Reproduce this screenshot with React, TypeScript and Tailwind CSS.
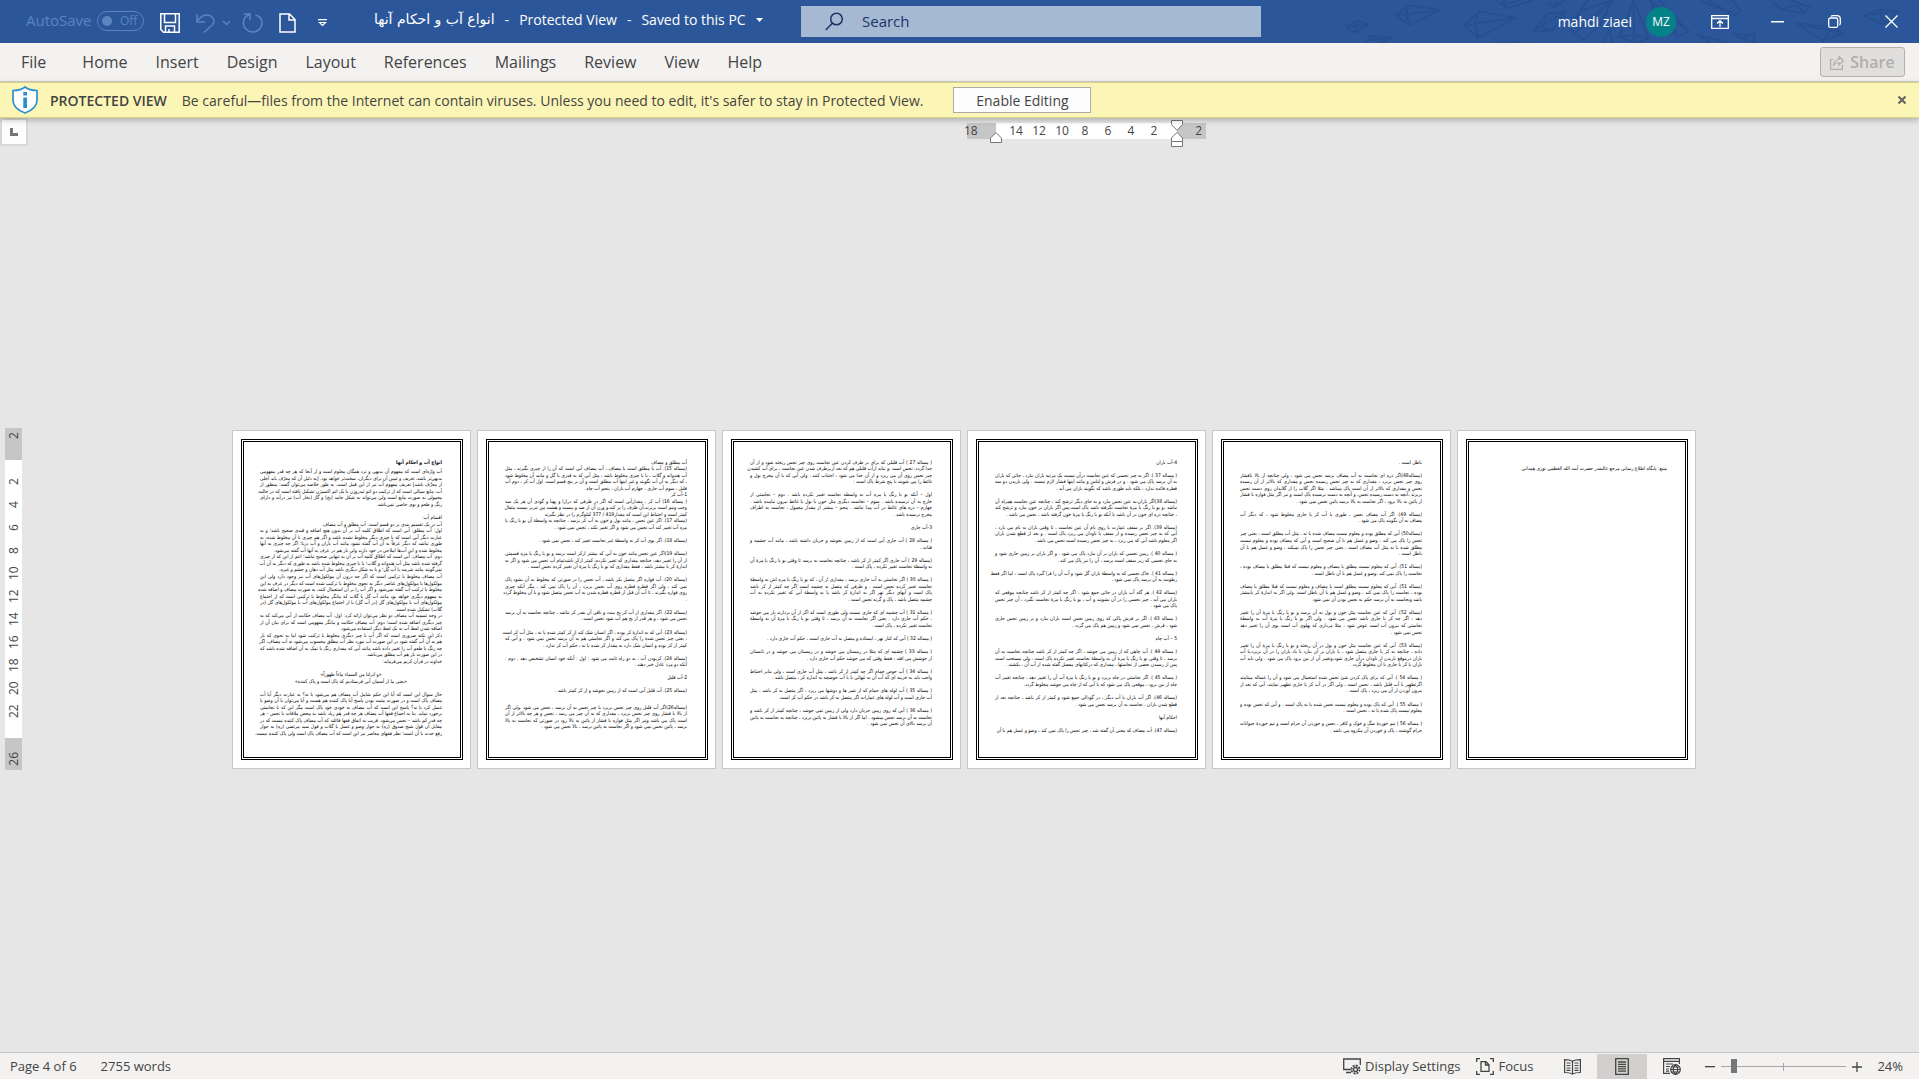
import type { ReactNode } from "react";
import clsx from "clsx";

type Block = {
  lines: string[];
  align?: "center";
  bold?: boolean;
  half?: boolean;
};

const p = (...lines: string[]): Block => ({ lines });
const gap: Block = { lines: [""] };
const halfGap: Block = { lines: [""], half: true };

const pages: Block[][] = [
  [
    { lines: ["انواع آب و احکام آنها"], bold: true },
    halfGap,
    p(
      "آب واژه‌ای است که مفهوم آن بدیهی و نزد همگان معلوم است و از آنجا که هر چه قدر مفهومی",
      "بدیهی‌تر باشد، تعریف و تبیین آن برای دیگران، سخت‌تر خواهد بود. [به دلیل آن که معرّف باید اَجلی",
      "از معرَّف باشد] تعریف مفهوم آب نیز از این قبیل است. به طور خلاصه می‌توان گفت: منظور از",
      "آب، مایع سیالی است که از ترکیب دو اتم ئیدروژن با یک اتم اکسیژن تشکیل یافته است که در حالت",
      "معمولی به صورت مایع است ولی می‌تواند به شکل جامد (یخ) و گاز (بخار آب) نیز در‌آید و دارای",
      "رنگ و طعم و بوی خاصی نمی‌باشد.",
    ),
    gap,
    p("اقسام آب:"),
    p("آب در یک تقسیم بندی بر دو قسم است: آب مطلق و آب مضاف."),
    p(
      "اول: آب مطلق: آبی است که اطلاق کلمه آب بر آن بدون هیچ اضافه و قیدی صحیح باشد؛ و به",
      "عبارت دیگر آبی است که با چیزی دیگر مخلوط نشده باشد و اگر هم چیزی با آن مخلوط شده، به",
      "طوری نباشد که دیگر عرفاً به آن آب گفته نشود مانند آب باران و آب دریا؛ اگر چه چیزی به آنها",
      "مخلوط شده و این آب‌ها املاحی در خود دارند ولی باز هم در عرف به آنها آب گفته می‌شود.",
    ),
    p(
      "دوم: آب مضاف: آبی است که اطلاق کلمه آب بر آن به تنهایی صحیح نباشد؛ اعم از این که از چیزی",
      "گرفته شده باشد مثل آب هندوانه و گلاب؛ یا با چیزی مخلوط شده باشد به طوری که دیگر به آن آب",
      "نمی‌گویند مانند شربت یا آب گِل؛ و یا به شکل دیگری باشد مثل آب دهان و چشم و غیره.",
    ),
    p(
      "آب مضاف مخلوط یا ترکیبی است که اگر چه درون آن مولکول‌های آب نیز وجود دارد ولی این",
      "مولکول‌ها با مولکول‌های عناصر دیگر به نحوی مخلوط یا ترکیب شده است که دیگر در عرف به این",
      "مخلوط یا ترکیب آب گفته نمی‌شود و اگر آب را بر آن استعمال کنند، به صورت مضاف و اضافه شده",
      "به مفهوم دیگری خواهد بود مانند آب گل یا گلاب که بیانگر مخلوط یا ترکیبی است که از اجتماع",
      "مولکول‌های آب با مولکول‌های گل (در آب گل) یا از اجتماع مولکول‌های آب با مولکول‌های گل (در",
      "گلاب) تشکیل شده است.",
    ),
    p(
      "در وجه تسمیه آب مضاف دو نظر می‌توان ارائه کرد: اول: آب مضاف حکایت از آبی می‌کند که به",
      "چیز دیگری اضافه شده است؛ دوم: آب مضاف حکایت و بیانگر مفهومی است که برای بیان آن از",
      "اضافه شدن لفظ آب به یک لفظ دیگر استفاده می‌شود.",
    ),
    p(
      "ذکر این نکته ضروری است که اگر آب با چیز دیگری مخلوط یا ترکیب شود اما به نحوی که باز",
      "هم به آن آب گفته شود در این صورت آب مورد نظر آب مطلق محسوب می‌شود نه آب مضاف، اگر",
      "چه رنگ یا طعم آب را تغییر داده باشد مانند آبی که مقداری رنگ یا نمک به آن اضافه شده باشد که",
      "در این صورت باز هم آب مطلق می‌باشد.",
    ),
    p("خداوند در قرآن کریم می‌فرماید:"),
    gap,
    { lines: ["«و انزلنا من السماء ماءاً طهوراً»", "«یعنی ما از آسمان آبی فرستادیم که پاک است و پاک کننده»"], align: "center" },
    gap,
    p(
      "حال سوال این است که آیا این حکم شامل آب مضاف هم می‌شود یا نه؟ به عبارت دیگر آیا آب",
      "مضاف پاک است و در صورت مثبت بودن پاسخ آیا پاک کننده هم هست و آیا می‌توان با آن وضو یا",
      "غسل کرد یا نه؟ پاسخ این است که آب مضاف به خودی خود پاک است مگر این که با نجاستی",
      "برخورد نماید. بنا به اجماع فقها آب مضاف هر چه قدر هم زیاد باشد به محض ملاقات با نجس – هر",
      "چه قدر کم باشد – نجس می‌شود. قریب به اتفاق فقها قائلند که آب مضاف پاک کننده نیست که در",
      "مقابل آن قول شیخ صدوق (ره) به جواز وضو و غسل با گلاب و قول سید مرتضی (ره) به جواز",
      "رفع حدث با آن است؛ نظر فقهای معاصر نیز این است که آب مضاف پاک است ولی پاک کننده نیست.",
    ),
  ],
  [
    p("آب مطلق و مضاف"),
    p(
      "(مساله 15). آب یا مطلق است یا مضاف ، آب مضاف آبی است که آن را از چیزی بگیرند ، مثل",
      "آب هندوانه و گلاب ، یا با چیزی مخلوط باشد ، مثل آبی که به قدری با گل و مانند آن مخلوط شود",
      "، که دیگر به آن آب نگویند و غیر اینها آب مطلق است و آن بر پنج قسم است. اول آب کر ، دوم آب",
      "قلیل ، سوم آب جاری ، چهارم آب باران ، پنجم آب چاه .",
    ),
    p("1-آب کر"),
    p(
      "( مساله 16) آب کر ، مقدارآبی است که اگر در ظرفی که درازا و پهنا و گودی آن هر یک سه",
      "وجب ونیم است بریزند،آن ظرف را پر کند،و وزن آن از صد و بیست و هشت من تبریز بیست مثقال",
      "کمتر است و احتیاط این است که مقدار419 / 377 کیلوگرم را در نظر بگیرند",
    ),
    p(
      "(مساله 17). اگر عین نجس ، مانند بول و خون به آب کر برسد ، چنانچه به واسطهٔ آن بو یا رنگ یا",
      "مزه آب تغییر کند آب نجس می شود و اگر تغییر نکند ، نجس نمی شود .",
    ),
    gap,
    p("(مساله 18). اگر بوی آب کر به واسطهٔ غیر نجاست تغییر کند ، نجس نمی شود ."),
    gap,
    p(
      "(مساله 19)اگر عین نجس مانند خون به آبی که بیشتر ازکر است برسد و بو یا رنگ یا مزه قسمتی",
      "از آن را تغییر دهد، چنانچه مقداری که تغییر نکرده، کمتر ازکر باشدتمام آب نجس می شود و اگر به",
      "اندازهٔ کر یا بیشتر باشد ، فقط مقداری که بو یا رنگ یا مزهٔ آن تغییر کرده نجس است .",
    ),
    gap,
    p(
      "(مساله 20). آب فواره اگر متصل بکر باشد ، آب نجس را در صورتی که مخلوط به آن بشود پاک",
      "نمی کند ، ولی اگر قطره قطره روی آب نجس بریزد ، آن را پاک نمی کند ، مگر آنکه چیزی",
      "روی فواره بگیرند ، تا آب آن قبل از قطره قطره شدن به آب نجس متصل شود و با آن مخلوط گردد",
      ".",
    ),
    gap,
    p(
      "(مساله 22). اگر مقداری از آب کر یخ ببندد و باقی آن بقدر کر نباشد ، چنانچه نجاست به آن برسد",
      "نجس می شود ، و هر قدر از یخ هم آب شود نجس است .",
    ),
    gap,
    p(
      "(مساله 23). آبی که به اندازهٔ کر بوده ، اگر انسان شک کند از کر کمتر شده یا نه ، مثل آب کر است",
      "، یعنی چیز نجس شده را پاک می کند و اگر نجاستی هم به آن برسد نجس نمی شود . و آبی که",
      "کمتر از کر بوده و انسان شک دارد به مقدار کر شده یا نه ، حکم آب کر ندارد .",
    ),
    gap,
    p(
      "(مساله 24). کربودن آب ، به دو راه ثابت می شود : اول : آنکه خود انسان تشخیص دهد . دوم :",
      "آنکه دو مرد عادل خبر دهند .",
    ),
    gap,
    p("2-آب قلیل"),
    gap,
    p("(مساله 25). آب قلیل آبی است که از زمین نجوشد و از کر کمتر باشد ."),
    gap,
    halfGap,
    p(
      "(مساله26)اگر آب قلیل روی چیز نجس بریزد یا چیز نجس به آن برسد ، نجس می شود .ولی اگر",
      "از بالا با فشار روی چیز نجس بریزد ، مقداری که به آن چیز می رسد ، نجس و هر چه بالاتر از آن",
      "است پاک می باشد ونیز اگر مثل فواره با فشار از پائین به بالا رود در صورتی که نجاست به بالا",
      "برسد ، پائین نجس نمی شود و اگر نجاست به پائین برسد ، بالا نجس می شود .",
    ),
  ],
  [
    p(
      "( مساله 27 ) آب قلیلی که برای بر طرف کردن عین نجاست روی چیز نجس ریخته شود و از آن",
      "جدا گردد، نجس است .و نباید ازآب قلیلی هم که بعد ازبرطرف شدن عین نجاست ، برای آب کشیدن",
      "چیز نجس روی آن می ریزد و از آن جدا می شود ، اجتناب کنند . ولی آبی که با آن مخرج بول و",
      "غائط را می شویند با پنج شرط پاک است :",
    ),
    gap,
    p(
      "اول – آنکه بو یا رنگ یا مزه آب به واسطه نجاست تغییر نکرده باشد . دوم – نجاستی از",
      "خارج به آن نرسیده باشد . سوم – نجاست دیگری مثل خون یا بول یا غائط بیرون نیامده باشد .",
      "چهارم – ذره های غائط در آب پیدا نباشد . پنجم – بیشتر از مقدار معمول ، نجاست به اطراف",
      "مخرج نرسیده باشد .",
    ),
    gap,
    p("3-آب جاری"),
    gap,
    p(
      "( مساله 28 ) آب جاری آبی است که از زمین بجوشد و جریان داشته باشد ، مانند آب چشمه و",
      "قنات .",
    ),
    gap,
    p(
      "(مساله 29 ) آب جاری اگر کمتر از کر باشد ، چنانچه نجاست به برسد تا وقتی بو یا رنگ یا مزهٔ آن",
      "به واسطهٔ نجاست تغییر نکرده ، پاک است .",
    ),
    gap,
    p(
      "( مساله 30 ) اگر نجاستی به آب جاری برسد ، مقداری از آن ، که بو یا رنگ یا مزه اش به واسطهٔ",
      "نجاست تغییر کرده نجس است . و طرفی که متصل به چشمه است اگر چه کمتر از کر باشد",
      "پاک است و آبهای دیگر نهر اگر به اندازهٔ کر باشد یا به واسطهٔ آبی که تغییر نکرده به آب",
      "چشمه متصل باشد ، پاک و گرنه نجس است .",
    ),
    gap,
    p(
      "( مساله 31 ) آب چشمه ای که جاری نیست ولی طوری است که اگر از آن بردارند باز می جوشد",
      "، حکم آب جاری دارد . یعنی اگر نجاست به آن برسد ، تا وقتی بو یا رنگ یا مزهٔ آن به واسطهٔ",
      "نجاست تغییر نکرده ، پاک است .",
    ),
    gap,
    p("( مساله 32 ) آبی که کنار نهر ، ایستاده و متصل به آب جاری است ، حکم آب جاری دارد ."),
    gap,
    p(
      "( مساله 33 ) چشمه ای که مثلا در زمستان می جوشد و در زمستان می جوشد و در تابستان",
      "از جوشش می افتد ، فقط وقتی که می جوشد حکم آب جاری دارد .",
    ),
    gap,
    p(
      "( مساله 34 ) آب حوض حمام اگر چه کمتر از کر باشد ، مثل آب جاری است ، ولی بنابر احتیاط",
      "واجب باید به خزینه ای که آب آن به تنهائی یا با آب حوضچه به اندازه کر ، متصل باشد .",
    ),
    gap,
    p(
      "( مساله 35 ) آب لوله های حمام که از شیر ها و دوشها می ریزد ، اگر متصل به کر باشد ، مثل",
      "آب جاری است و آب لوله های عمارات اگر متصل به کر باشد در حکم آب کر است.",
    ),
    gap,
    p(
      "( مساله 36 ) آبی که روی زمین جریان دارد ولی از زمین نمی جوشد ، چنانچه کمتر از کر باشد و",
      "نجاست به آن برسد نجس میشود . اما اگر از بالا با فشار به پائین بریزد ، چنانچه به نجاست به پائین",
      "آن برسد بالای آن نجس نمی شود .",
    ),
  ],
  [
    p("4-آب باران"),
    gap,
    p(
      "( مساله 37 ). اگر به چیز نجسی که عین نجاست درآن نیست یک مرتبه باران ببارد ، جائی که باران",
      "به آن برسد پاک می شود . و در فرش و لباس و مانند اینها فشار لازم نیست . ولی باریدن دو سه",
      "قطره فائده ندارد ، بلکه باید طوری باشد که بگویند باران می آید .",
    ),
    gap,
    p(
      "(مساله 38)اگر باران،به عین نجس ببارد و به جای دیگر ترشح کند ، چنانچه عین نجاست همراه آن",
      "نباشد ،و بو یا رنگ یا مزهٔ نجاست نگرفته باشد پاک است.پس اگر باران بر خون ببارد و ترشح کند",
      "، چنانچه ذره ای خون در آن باشد یا آنکه بو یا رنگ یا مزهٔ خون گرفته باشد ، نجس می باشد .",
    ),
    gap,
    p(
      "(مساله 39). اگر بر سقف عمارت یا روی بام آن عین نجاست ، تا وقتی باران به بام می بارد ،",
      "آبی که به چیز نجس رسیده و از سقف یا ناودان می ریزد پاک است . و بعد از قطع شدن باران",
      "اگر معلوم باشد آبی که می ریزد ، به چیز نجس رسیده است نجس می باشد .",
    ),
    gap,
    p(
      "( مساله 40 ). زمین نجسی که باران بر آن ببارد پاک می شود . و اگر باران بر زمین جاری شود و",
      "به جای نجسی که زیر سقف است برسد ، آن را نیز پاک می کند .",
    ),
    gap,
    p(
      "( مساله 41 ). خاک نجسی که به واسطهٔ باران گل شود و آب آن را فرا گیرد پاک است ، اما اگر فقط",
      "رطوبت به آن برسد پاک نمی شود .",
    ),
    gap,
    p(
      "(مساله 42 ). هر گاه آب باران در جائی جمع شود ، اگر چه کمتر از کر باشد چنانچه موقعی که",
      "باران می آید ، چیز نجسی را در آن بشویند و آب ، بو یا رنگ یا مزهٔ نجاست نگیرد ، آن چیز نجس",
      "پاک می شود .",
    ),
    gap,
    p(
      "( مساله 43 ). اگر بر فرش پاکی که روی زمین نجس است باران ببارد و بر زمین نجس جاری",
      "شود ، فرش ، نجس نمی شود و زمین هم پاک می گردد .",
    ),
    gap,
    p("5 – آب چاه"),
    gap,
    p(
      "( مساله 44 ). آب چاهی که از زمین می جوشد ، اگر چه کمتر از کر باشد چنانچه نجاست به آن",
      "برسد ، تا وقتی بو یا رنگ یا مزهٔ آن به واسطهٔ نجاست تغییر نکرده پاک است ، ولی مستحب است",
      "پس از رسیدن بعضی از نجاستها ، مقداری که درکتابهای مفصل گفته شده از آب آن ، بکشند .",
    ),
    gap,
    p(
      "( مساله 45 ). اگر نجاستی در چاه بریزد و بو یا رنگ یا مزهٔ آب آن را تغییر دهد ، چنانچه تغییر آب",
      "چاه از بین برود ، موقعی پاک می شود که با آبی که از چاه می جوشد مخلوط گردد.",
    ),
    gap,
    p(
      "(مساله 46). اگر آب باران یا آب دیگر ، در گودالی جمع شود و کمتر از کر باشد ، چنانچه بعد از",
      "قطع شدن باران ، نجاست به آن برسد نجس می شود .",
    ),
    gap,
    p("احکام آبها"),
    gap,
    p("(مساله 47). آب مضاف که معنی آن گفته شد ، چیز نجس را پاک نمی کند ، وضو و غسل هم با آن"),
  ],
  [
    p("باطل است ."),
    gap,
    p(
      "(مساله48)اگر ذره ای نجاست به آب مضاف برسد نجس می شود ، ولی چنانچه از بالا بافشار",
      "روی چیز نجس بریزد ، مقداری که به چیز نجس رسیده نجس و مقداری که بالاتر از آن رسیده",
      "نجس و مقداری که بالاتر از آن است پاک میباشد . مثلا اگر گلاب را از گلابدان روی دست نجس",
      "بریزند ،آنچه به دست رسیده نجس، و آنچه به دست نرسیده پاک است و نیز اگر مثل فواره با فشار",
      "از پائین به بالا برود ، اگر نجاست به بالا برسد پائین نجس نمی شود .",
    ),
    gap,
    p(
      "(مساله 49). اگر آب مضاف نجس ، طوری با آب کر یا جاری مخلوط شود ، که دیگر آب",
      "مضاف به آن نگویند پاک می شود .",
    ),
    gap,
    p(
      "(مساله50) آبی که مطلق بوده و معلوم نیست مضاف شده یا نه ، مثل آب مطلق است ، یعنی چیز",
      "نجس را پاک می کند ، وضو و غسل هم با آن صحیح است و آبی که مضاف بوده و معلوم نیست",
      "مطلق شده یا نه مثل آب مضاف است ، یعنی چیز نجس را پاک نمیکند ، وضو و غسل هم با آن",
      "باطل است .",
    ),
    gap,
    p(
      "(مساله 51). آبی که معلوم نیست مطلق یا مضاف و معلوم نیست که قبلا مطلق یا مضاف بوده ،",
      "نجاست را پاک نمی کند ،وضو و غسل هم با آن باطل است .",
    ),
    gap,
    p(
      "(مساله 51). آبی که معلوم نیست مطلق است یا مضاف و معلوم نیست که قبلا مطلق یا مضاف",
      "بوده ، نجاست را پاک نمی کند ، وضو و غسل هم با آن باطل است .ولی اگر به اندازهٔ کر یابیشتر",
      "باشد ونجاست به آن برسد حکم به نجس بودن آن نمی شود",
    ),
    gap,
    p(
      "(مساله 52). آبی که عین نجاست مثل خون و بول به آن برسد و بو یا رنگ یا مزهٔ آن را تغییر",
      "دهد ، اگر چه کر یا جاری باشد نجس می شود . ولی اگر بو یا رنگ یا مزهٔ آب به واسطهٔ",
      "نجاستی که بیرون آب است عوض شود ، مثلا مرداری که پهلوی آب است بوی آن را تغییر دهد",
      "نجس نمی شود .",
    ),
    gap,
    p(
      "(مساله 53). آبی که عین نجاست مثل خون و بول در آن ریخته و بو یا رنگ یا مزهٔ آن را تغییر",
      "داده ، چنانچه به کر یا جاری متصل شود ، یا باران بر آن ببارد یا باد باران را در آن بریزد،یا آب",
      "باران درموقع باریدن از ناودان درآن جاری شود،وتغییر آن از بین برود پاک می شود . ولی باید آب",
      "باران یا کر یا جاری با آن مخلوط گردد .",
    ),
    gap,
    p(
      "( مساله 54 ). آبی که برای پاک کردن شئ نجس شده استعمال می شود و آن را غساله مینامند",
      "اگرتطهیر با آب قلیل باشد ، نجس است ، ولی اگر در آب کر یا جاری تطهیر نمایند، آبی که بعد از",
      "بیرون آوردن از آن می ریزد ، پاک است .",
    ),
    gap,
    p(
      "( مساله 55 ). آبی که پاک بوده و معلوم نیست نجس شده یا نه پاک است . و آبی که نجس بوده و",
      "معلوم نیست پاک شده یا نه ، نجس است .",
    ),
    gap,
    p(
      "( مساله 56 ) نیم خوردهٔ سگ و خوک و کافر ، نجس و خوردن آن حرام است و نیم خوردهٔ حیوانات",
      "حرام گوشت ، پاک و خوردن آن مکروه می باشد .",
    ),
  ],
  [gap, p("منبع: پایگاه اطلاع رسانی مرجع عالیقدر حضرت آیت الله العظمی نوری همدانی")],
];

const tabs = ["Home", "Insert", "Design", "Layout", "References", "Mailings", "Review", "View", "Help"];

function Sheet({ blocks }: { blocks: Block[] }) {
  return (
    <article dir="rtl" lang="fa" className="h-[339px] w-[239px] border border-[#c6c6c6] bg-white py-2 pl-2 pr-[7px]">
      <div className="h-full border-[3px] border-double border-black pl-4 pr-[18px] pt-[17px]">
        <div className="grid h-[278px] grid-cols-1 grid-rows-[repeat(85,minmax(0,1fr))] font-['DejaVu_Sans_Condensed','DejaVu_Sans',sans-serif] text-[5px] leading-[6px] text-black">
          {blocks.map((block, i) =>
            block.lines.map((line, j) => (
              <p
                key={`${i}-${j}`}
                className={clsx(
                  "whitespace-nowrap",
                  block.half ? "row-span-1" : "row-span-2",
                  block.bold && "font-bold",
                  block.align === "center" && "text-center",
                  block.align !== "center" && j < block.lines.length - 1 && "[text-align-last:justify]",
                )}
              >
                {line}
              </p>
            )),
          )}
        </div>
      </div>
    </article>
  );
}

function RulerTop() {
  return (
    <div className="relative flex h-4 w-[239px] text-[12px] leading-4 text-[#444444]">
      <div className="w-[29px] bg-[#c6c6c6]">
        <span className="-ml-[3px]">18</span>
      </div>
      <div className="flex flex-1 justify-center bg-white pr-[3px]">
        {[14, 12, 10, 8, 6, 4, 2].map((n) => (
          <span key={n} className="w-[23px] text-center">
            {n}
          </span>
        ))}
      </div>
      <div className="w-[29px] bg-[#c6c6c6] pr-1 text-right">2</div>
      <svg className="absolute left-[23px] top-[9px]" width="12" height="11" viewBox="0 0 12 11">
        <path d="M.5 10.500V6L6 .7 11.500 6v4.500z" fill="#fff" stroke="#767676" />
      </svg>
      <svg className="absolute -top-[3px] right-[23px]" width="12" height="28" viewBox="0 0 12 28">
        <path d="M.5.500h11V4.500L6 10.300.5 4.500zM.5 21.500V18L6 12.300 11.500 18v3.500zM.5 21.500h11v5H.5z" fill="#fff" stroke="#767676" />
      </svg>
    </div>
  );
}

function RulerSide() {
  return (
    <div className="ml-[5px] flex w-[17px] flex-col text-[12px] text-[#444444]">
      <div className="flex h-8 items-start justify-center bg-[#c6c6c6] pt-1">
        <span className="rotate-180 leading-4 [writing-mode:vertical-rl]">2</span>
      </div>
      <div className="flex h-[278px] flex-col items-center bg-white pt-[10px]">
        {[2, 4, 6, 8, 10, 12, 14, 16, 18, 20, 22].map((n) => (
          <span key={n} className="h-[23px] rotate-180 text-center leading-4 [writing-mode:vertical-rl]">
            {n}
          </span>
        ))}
      </div>
      <div className="flex h-8 items-end justify-center bg-[#c6c6c6] pb-1">
        <span className="rotate-180 leading-4 [writing-mode:vertical-rl]">26</span>
      </div>
    </div>
  );
}

// faint line art in the right half of the title bar
function TitleArt() {
  return (
    <svg
      className="pointer-events-none absolute right-0 top-0 h-full w-[639px]"
      viewBox="0 0 1568 129"
      preserveAspectRatio="none"
      fill="none"
      stroke="#264f8f"
      strokeWidth="5"
      aria-hidden
    >
      <path d="M163 80l28-18 26 12-34 25zM163 80l54-6M191 62l-8 37M183 75l8 6" />
      <path d="M282 46l35-30 76 14-73 45zM282 46l111-16M317 16l-8 27 11 32M309 43l84-13" />
      <path d="M212 128l10-20 53 5-30 16M222 108l6 12 47-7" />
      <path d="M451 76l38-42 92 20-94 60zM451 76l130-22M489 34l-12 36 10 44M477 70l104-16" />
      <path d="M527 0l33 24 62-24M547 0l13 24M560 10l32-10M530 129l60-4" />
      <path d="M622 92l34-52 44-4-32 56zM656 40l-12 40M622 92l78-56M644 80l24 12" />
      <path d="M655 10l20 12 24-22M675 22l5-16" />
      <path d="M714 88l20-54 82-34-30 74-42 46zM734 34l-6 60 88-94M714 88l30 32M756 0l-22 34" />
      <path d="M832 112l36-112 36 116-32 12zM868 0v128M832 112l36-8 36 12M790 128l20-40 4 40" />
      <path d="M908 0l96 96-30 12-40-40zM930 0l74 96M974 108l-24-70M908 0l26 68" />
      <path d="M1022 104l76 24M1022 104l34 24M1030 0l86 46 14-12-20-34M1050 0l66 46" />
      <path d="M1116 102l48 0 0 26-24-10zM1164 102l-34 14M1140 118l24 10" />
      <path d="M1210 4l20 24 54 12 16-18-48-22M1230 28l40-14M1284 40l-14-26" />
      <path d="M1268 70l88 10 24 20-48 24zM1268 70l112 30M1356 80l-24 44" />
      <path d="M1432 46l40-16 44 4-36 40zM1432 46l84-12M1472 30l8 44" />
    </svg>
  );
}

function IconButton({ label, className, children }: { label: string; className?: string; children: ReactNode }) {
  return (
    <button type="button" aria-label={label} className={clsx("flex shrink-0 items-center justify-center", className)}>
      {children}
    </button>
  );
}

function TitleBar() {
  return (
    <header className="relative flex h-[43px] shrink-0 items-center bg-[#2b579a] text-[15px] text-white">
      <TitleArt />
      <div className="flex w-[801px] shrink-0 items-center pb-[2px] pl-[26px]">
        <span id="autosave" className="w-[71px] text-[#5b84c0]">AutoSave</span>
        <button
          type="button"
          role="switch"
          aria-checked="false"
          aria-labelledby="autosave"
          className="flex h-5 w-[47px] items-center gap-2 rounded-full border border-[#5b84c0] pl-1 text-[12px] text-[#5b84c0]"
        >
          <span className="size-[10px] rounded-full bg-[#5b84c0]" />
          Off
        </button>
        <IconButton label="Save" className="ml-4 pt-1">
          <svg width="20" height="20" viewBox="0 0 20 20" fill="none" stroke="currentColor" strokeWidth="1.500">
            <path d="M.8.8h18.400v18.400H3.500L.8 16.500zM4.500 1v8.500h11V1M5.500 19v-6h9v6M9 16v3" />
          </svg>
        </IconButton>
        <IconButton label="Undo" className="ml-4 pt-1 text-[#5b84c0]">
          <svg width="20" height="20" viewBox="0 0 20 20" fill="none" stroke="currentColor" strokeWidth="1.500">
            <path d="M1 1v8h8M1.500 8.500C5 2 12 0 16 4c4 4 1 8-2 10l-6 5.500" />
          </svg>
        </IconButton>
        <IconButton label="Undo history" className="ml-[6px] pt-1 text-[#5b84c0]">
          <svg width="9" height="6" viewBox="0 0 9 6" fill="none" stroke="currentColor" strokeWidth="1.500">
            <path d="M1 1l3.500 3.500L8 1" />
          </svg>
        </IconButton>
        <IconButton label="Redo" className="ml-[11px] pt-1 text-[#5b84c0]">
          <svg width="21" height="20" viewBox="0 0 21 20" fill="none" stroke="currentColor" strokeWidth="1.500">
            <path d="M2 1h6v6M8 1.500C3 3 1 7 1.500 11c.5 5 5 8 9.500 8s9-4 9-9c0-4-3-7-6.500-8" />
          </svg>
        </IconButton>
        <IconButton label="New" className="ml-4 pt-1">
          <svg width="17" height="20" viewBox="0 0 17 20" fill="none" stroke="currentColor" strokeWidth="1.500">
            <path d="M1 1h9.500L16 6.500V19H1zM10 1v6h6" />
          </svg>
        </IconButton>
        <IconButton label="Customize Quick Access Toolbar" className="ml-[22px] pt-1">
          <svg width="9" height="8" viewBox="0 0 9 8" fill="none" stroke="currentColor" strokeWidth="1.200">
            <path d="M0 .7h9M1.500 3.500h6l-3 3z" />
          </svg>
        </IconButton>
        <h1 className="ml-[47px] flex items-center gap-[10px] whitespace-nowrap pb-[2px] text-[14px]">
          <span dir="rtl" lang="fa" className="font-['DejaVu_Sans',sans-serif] text-[14px]">انواع آب و احکام آنها</span>
          <span>-</span>
          <span>Protected View</span>
          <span>-</span>
          <span>Saved to this PC</span>
          <svg width="7" height="4" viewBox="0 0 7 4" fill="currentColor">
            <path d="M0 0h7L3.500 4z" />
          </svg>
        </h1>
      </div>
      <label className="flex h-[31px] w-[460px] shrink-0 items-center bg-[#a5b9d3] pl-6 text-[#1a3668]">
        <svg width="19" height="19" viewBox="0 0 19 19" fill="none" stroke="currentColor" strokeWidth="1.500">
          <circle cx="11.500" cy="7" r="5.800" />
          <path d="M7.500 11L.8 18" />
        </svg>
        <input
          type="search"
          aria-label="Search"
          placeholder="Search"
          className="ml-[18px] min-w-0 flex-1 bg-transparent outline-none placeholder:text-[#1a3668] placeholder:opacity-100"
        />
      </label>
      <div className="relative ml-auto flex shrink-0 items-center">
        <span className="text-[14px]">mahdi ziaei</span>
        <span className="ml-[14px] flex size-[30px] items-center justify-center rounded-full bg-[#038387] text-[12px]">MZ</span>
        <IconButton label="Ribbon Display Options" className="ml-[34px] w-5">
          <svg width="18" height="14" viewBox="0 0 18 14" fill="none" stroke="currentColor" strokeWidth="1.300">
            <path d="M.7.7h16.600v12.600H.7zM1 3.500h16M9 12V6M6 8.500L9 5.700l3 2.800" />
          </svg>
        </IconButton>
        <IconButton label="Minimize" className="ml-7 w-[38px]">
          <svg width="13" height="2" viewBox="0 0 13 2" fill="currentColor">
            <path d="M0 0h13v1.500H0z" />
          </svg>
        </IconButton>
        <IconButton label="Restore" className="ml-[19px] w-[38px]">
          <svg width="13" height="13" viewBox="0 0 13 13" fill="none" stroke="currentColor" strokeWidth="1.300">
            <rect x=".7" y="3" width="9" height="9.300" rx="1.500" />
            <path d="M3 1.500C3.300.9 4 .7 5 .7h4c2 0 3.300 1.300 3.300 3.300v4c0 1-.3 1.600-.8 2" />
          </svg>
        </IconButton>
        <IconButton label="Close" className="ml-[19px] mr-[9px] w-[38px]">
          <svg width="13" height="13" viewBox="0 0 13 13" stroke="currentColor" strokeWidth="1.300">
            <path d="M.5.500l12 12M12.500.500l-12 12" />
          </svg>
        </IconButton>
      </div>
    </header>
  );
}

function Ribbon() {
  return (
    <nav className="flex h-[39px] shrink-0 items-center border-b border-[#d2d0ce] bg-[#f3f2f1] pl-[21px] pr-[14px] text-[16px] text-[#444444]">
      <button type="button" className="mr-9">File</button>
      <div className="flex gap-7">
        {tabs.map((tab) => (
          <button key={tab} type="button">
            {tab}
          </button>
        ))}
      </div>
      <button
        type="button"
        disabled
        className="ml-auto flex h-[30px] w-[85px] items-center justify-center gap-[6px] rounded-[3px] border border-[#b3b0ad] bg-[#e1dfdd] font-semibold text-[#b1aeab]"
      >
        <svg width="14" height="15" viewBox="0 0 14 15" fill="none" stroke="currentColor" strokeWidth="1.200">
          <path d="M3 4.500H.6v9.900h11.800V10M3.500 10C4 6 6 4.500 9 4.500V1.500L13.400 6 9 10V7.500c-3 0-4 1-5.500 2.500z" />
        </svg>
        Share
      </button>
    </nav>
  );
}

function MessageBar() {
  return (
    <section className="z-10 flex h-9 shrink-0 items-center border-y border-[#d8d287] bg-[#fcf6b6] px-3 text-[14px] text-[#444444] shadow-[0_2px_6px_rgba(0,0,0,0.25)]">
      <svg width="26" height="28" viewBox="0 0 26 28" fill="none">
        <path d="M13 1c3 2.500 7.500 3.500 12 3.500V14c0 6-5 10.500-12 13C6 24.500 1 20 1 14V4.500C5.500 4.500 10 3.500 13 1z" fill="#fff" stroke="#2b8fd0" strokeWidth="1.700" />
        <path d="M11.300 6h3.700v3.500h-3.700zM11.300 11.500h3.700V22h-3.700z" fill="#2b8fd0" />
      </svg>
      <strong className="ml-3 whitespace-nowrap font-semibold">PROTECTED VIEW</strong>
      <p className="ml-[15px] whitespace-nowrap">
        Be careful—files from the Internet can contain viruses. Unless you need to edit, it's safer to stay in Protected View.
      </p>
      <button type="button" className="ml-[30px] h-[26px] w-[138px] shrink-0 border border-[#ababab] bg-[#fdfdfd]">
        Enable Editing
      </button>
      <IconButton label="Close message" className="ml-auto text-[#666666]">
        <svg width="10" height="10" viewBox="0 0 10 10" stroke="currentColor" strokeWidth="2.200">
          <path d="M1.500 1.500l7 7M8.500 1.500l-7 7" />
        </svg>
      </IconButton>
    </section>
  );
}

function Workspace() {
  return (
    <main className="flex flex-1 flex-col bg-[#e6e6e6]">
      <div className="flex h-7 shrink-0 pr-[19px]">
        <button type="button" aria-label="Tab selector" className="flex size-7 shrink-0 items-center justify-center border-2 border-[#d8d8d8] bg-[#fdfdfd]">
          <svg width="8" height="8" viewBox="0 0 8 8" fill="none" stroke="#767676" strokeWidth="3">
            <path d="M1.500 0v6.500H8" />
          </svg>
        </button>
        <div className="grid flex-1 grid-cols-[repeat(6,239px)] justify-center gap-[6px] pt-[5px]">
          <div className="col-start-4">
            <RulerTop />
          </div>
        </div>
      </div>
      <div className="flex flex-1 items-center pr-[19px]">
        <RulerSide />
        <div className="ml-[6px] grid flex-1 grid-cols-[repeat(6,239px)] justify-center gap-[6px]">
          {pages.map((blocks, i) => (
            <Sheet key={i} blocks={blocks} />
          ))}
        </div>
      </div>
    </main>
  );
}

function StatusBar() {
  return (
    <footer className="flex h-[27px] shrink-0 items-center whitespace-nowrap border-t border-[#c8c6c4] bg-[#f3f2f1] pl-[10px] pr-4 pt-px text-[13px] text-[#444444]">
      <span>Page 4 of 6</span>
      <span className="ml-6">2755 words</span>
      <button type="button" className="ml-auto flex items-center gap-1">
        <svg width="18" height="17" viewBox="0 0 18 17" fill="none" stroke="currentColor" strokeWidth="1.300">
          <path d="M8 11.500H.7V1h16.600v6M3 14.500h5" />
          <circle cx="12.500" cy="11.500" r="2" />
          <circle cx="12.500" cy="11.500" r="4" strokeWidth="1.800" strokeDasharray="2 1.100" />
        </svg>
        Display Settings
      </button>
      <button type="button" className="ml-4 flex items-center gap-1">
        <svg width="18" height="17" viewBox="0 0 18 17" fill="none" stroke="currentColor" strokeWidth="1.300">
          <path d="M4 .7H.7V4M14 .7h3.300V4M4 16.300H.7V13M14 16.300h3.300V13M5 3.700h5l3 3v6.600H5zM9.500 4v3H13" />
        </svg>
        Focus
      </button>
      <IconButton label="Read Mode" className="ml-[14px] h-[26px] w-[50px]">
        <svg width="17" height="16" viewBox="0 0 17 16" fill="none" stroke="currentColor" strokeWidth="1.200">
          <path d="M8.500 2.200C6.500 1 4 .7.6.7v12.800c3.400 0 5.900.3 7.900 1.500 2-1.200 4.500-1.500 7.900-1.500V.7c-3.400 0-5.900.3-7.900 1.500zM8.500 2v13M2.500 4h4M2.500 6.500h4M2.500 9h4M2.500 11.300h4M10.500 4h4M10.500 6.500h4M10.500 9h4M10.500 11.300h4" />
        </svg>
      </IconButton>
      <IconButton label="Print Layout" className="h-[26px] w-[50px] bg-[#d2d0ce]">
        <svg width="14" height="17" viewBox="0 0 14 17" fill="none" stroke="currentColor" strokeWidth="1.300">
          <path d="M.7.7h12.600v15.600H.7zM3 4h8M3 6.300h8M3 8.600h8M3 10.900h8M3 13.200h8" />
        </svg>
      </IconButton>
      <IconButton label="Web Layout" className="h-[26px] w-[50px]">
        <svg width="18" height="17" viewBox="0 0 18 17" fill="none" stroke="currentColor" strokeWidth="1.200">
          <path d="M7 15.400H.6V.6h15.800V6M.6 3.300h15.800M3 6h7M3 8.500h4M3 11h3M3 13.200h3" />
          <circle cx="12.500" cy="11.500" r="4.800" />
          <path d="M7.700 11.500h9.600M12.500 6.700c-3 3-3 6.600 0 9.600M12.500 6.700c3 3 3 6.600 0 9.600M8.500 9h8M8.500 14h8" />
        </svg>
      </IconButton>
      <IconButton label="Zoom out" className="ml-2 w-[10px]">
        <svg width="10" height="2" viewBox="0 0 10 2" fill="currentColor">
          <path d="M0 0h10v1.300H0z" />
        </svg>
      </IconButton>
      <div className="relative ml-[6px] flex w-[125px] items-center">
        <span className="absolute left-[62px] h-2 w-px bg-[#a6a6a6]" />
        <input
          type="range"
          aria-label="Zoom"
          min={10}
          max={190}
          defaultValue={24}
          className="relative h-[14px] w-full appearance-none bg-transparent [&::-webkit-slider-runnable-track]:h-px [&::-webkit-slider-runnable-track]:bg-[#a6a6a6] [&::-webkit-slider-thumb]:-mt-[7px] [&::-webkit-slider-thumb]:h-[14px] [&::-webkit-slider-thumb]:w-[6px] [&::-webkit-slider-thumb]:appearance-none [&::-webkit-slider-thumb]:bg-[#777777]"
        />
      </div>
      <IconButton label="Zoom in" className="ml-[6px] w-[10px]">
        <svg width="10" height="10" viewBox="0 0 10 10" stroke="currentColor" strokeWidth="1.300">
          <path d="M0 5h10M5 0v10" />
        </svg>
      </IconButton>
      <span className="ml-[15px]">24%</span>
    </footer>
  );
}

export default function App() {
  return (
    <div className="flex h-screen flex-col overflow-hidden font-['Open_Sans','DejaVu_Sans',sans-serif]">
      <TitleBar />
      <Ribbon />
      <MessageBar />
      <Workspace />
      <StatusBar />
    </div>
  );
}
